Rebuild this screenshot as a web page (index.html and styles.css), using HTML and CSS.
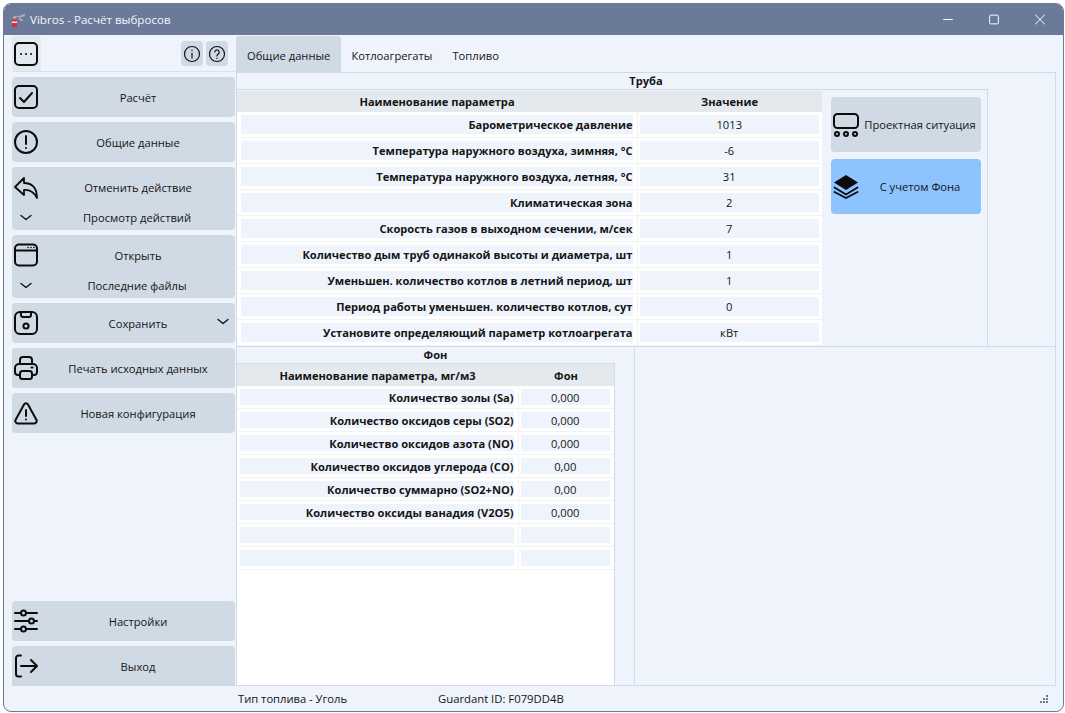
FILE: index.html
```html
<!DOCTYPE html>
<html lang="ru">
<head>
    <meta charset="UTF-8">
    <title>Vibros - Расчёт выбросов</title>
    <link rel="stylesheet" href="styles.css">
</head>
<body>
    <div class="window">
        <div class="titlebar">
            <svg class="app-icon" viewBox="0 0 16 16" width="16" height="16">
                <rect x="1" y="7" width="5" height="8" rx="1" fill="#d8303a"/>
                <rect x="1" y="9.500" width="5" height="1.500" fill="#f0e4e0"/>
                <path d="M2 7V4h6l6-2.500v3L9 5.500H5V7z" fill="#aeb3bc" stroke="#7f8591" stroke-width=".6"/>
                <path d="M9 5.500v2.500h3" fill="none" stroke="#c6cad1" stroke-width="1"/>
            </svg>
            <span class="app-title">Vibros - Расчёт выбросов</span>
            <div class="win-controls">
                <svg class="win-btn" viewBox="0 0 46 32"><path d="M18 16h10" stroke="#fff" fill="none"/></svg>
                <svg class="win-btn" viewBox="0 0 46 32"><rect x="18.5" y="11.5" width="9" height="9" rx="1" stroke="#fff" fill="none"/></svg>
                <svg class="win-btn" viewBox="0 0 46 32"><path d="M18 11l10 10M28 11L18 21" stroke="#fff" fill="none"/></svg>
            </div>
        </div>

        <div class="main">
            <div class="sidebar">
                <div class="side-top">
                    <div class="menu-btn">
                        <svg class="icon" viewBox="0 0 24 24"><rect x="1" y="1" width="22" height="22" rx="4"/><path d="M7 12h.01M12 12h.01M17 12h.01"/></svg>
                    </div>
                    <div class="help-btn">
                        <svg viewBox="0 0 18 18" width="18" height="18"><circle cx="9" cy="9" r="7.5"/><path d="M9 8v5M9 5v.5"/></svg>
                    </div>
                    <div class="help-btn">
                        <svg viewBox="0 0 18 18" width="18" height="18"><circle cx="9" cy="9" r="7.5"/><path d="M6.8 7a2.2 2.2 0 1 1 3.4 2c-.8.5-1.2 1-1.2 2M9 13v.5"/></svg>
                    </div>
                </div>

                <div class="side-btn">
                    <div class="side-row">
                        <svg class="icon" viewBox="0 0 24 24"><rect x="1" y="1" width="22" height="22" rx="4"/><path d="M6 13l4 4 8-9"/></svg>
                        <span class="side-label">Расчёт</span>
                    </div>
                </div>
                <div class="side-btn">
                    <div class="side-row">
                        <svg class="icon" viewBox="0 0 24 24"><circle cx="12" cy="12" r="11"/><path d="M12 6v8M12 18v.01"/></svg>
                        <span class="side-label">Общие данные</span>
                    </div>
                </div>
                <div class="side-btn">
                    <div class="side-row">
                        <svg class="icon" viewBox="0 0 24 24"><path d="M10 3L1 12l9 8v-5c6-.5 10 2 13 8 0-9-4-15-13-15z" stroke-width="1.800"/></svg>
                        <span class="side-label">Отменить действие</span>
                    </div>
                    <div class="side-sub">
                        <svg class="chevron" viewBox="0 0 12 8"><path d="M1 1.5l5 4 5-4"/></svg>
                        <span class="side-label">Просмотр действий</span>
                    </div>
                </div>
                <div class="side-btn">
                    <div class="side-row">
                        <svg class="icon" viewBox="0 0 24 24"><rect x="1" y="1.5" width="22" height="21" rx="4"/><path d="M1 7.5h22"/><path d="M14 4.5h.01M17 4.5h.01M20 4.5h.01" stroke-width="1.6"/></svg>
                        <span class="side-label">Открыть</span>
                    </div>
                    <div class="side-sub">
                        <svg class="chevron" viewBox="0 0 12 8"><path d="M1 1.5l5 4 5-4"/></svg>
                        <span class="side-label">Последние файлы</span>
                    </div>
                </div>
                <div class="side-btn">
                    <div class="side-row">
                        <svg class="icon" viewBox="0 0 24 24"><rect x="1" y="1" width="22" height="22" rx="5"/><path d="M7 1v3a2 2 0 0 0 2 2h6a2 2 0 0 0 2-2V1"/><circle cx="12" cy="15" r="2.600"/></svg>
                        <span class="side-label">Сохранить</span>
                        <svg class="chevron chevron-end" viewBox="0 0 12 8"><path d="M1 1.5l5 4 5-4"/></svg>
                    </div>
                </div>
                <div class="side-btn">
                    <div class="side-row">
                        <svg class="icon" viewBox="0 0 24 24"><path d="M6 8V4a3 3 0 0 1 3-3h6a3 3 0 0 1 3 3v4"/><path d="M6 19H4a3 3 0 0 1-3-3v-4a4 4 0 0 1 4-4h14a4 4 0 0 1 4 4v4a3 3 0 0 1-3 3h-2"/><rect x="6" y="15" width="12" height="8" rx="2.5"/><path d="M17.5 11.5h1"/></svg>
                        <span class="side-label">Печать исходных данных</span>
                    </div>
                </div>
                <div class="side-btn">
                    <div class="side-row">
                        <svg class="icon" viewBox="0 0 24 24"><path d="M10 3.5L1.5 19a2.5 2.5 0 0 0 2.2 3.5h16.6a2.5 2.5 0 0 0 2.2-3.5L14 3.5a2.3 2.3 0 0 0-4 0z"/><path d="M12 9v6M12 18.5v.01"/></svg>
                        <span class="side-label">Новая конфигурация</span>
                    </div>
                </div>

                <div class="side-spacer"></div>

                <div class="side-btn">
                    <div class="side-row">
                        <svg class="icon" viewBox="0 0 24 24"><path d="M1 4h6M12 4h11M1 12h14M20 12h3M1 20h6M12 20h11"/><circle cx="9.5" cy="4" r="2.5"/><circle cx="17.5" cy="12" r="2.5"/><circle cx="9.5" cy="20" r="2.5"/></svg>
                        <span class="side-label">Настройки</span>
                    </div>
                </div>
                <div class="side-btn side-last">
                    <div class="side-row">
                        <svg class="icon" viewBox="0 0 24 24"><path d="M7 1.5H4.5A2.5 2.5 0 0 0 2 4v16a2.500 2.500 0 0 0 2.500 2.500H7M7 12h16M17 6l6 6-6 6"/></svg>
                        <span class="side-label">Выход</span>
                    </div>
                </div>
            </div>

            <div class="content">
                <div class="tabs">
                    <div class="tab active">Общие данные</div>
                    <div class="tab">Котлоагрегаты</div>
                    <div class="tab">Топливо</div>
                </div>
                <div class="panel">
                    <div class="pipe-section">
                        <div class="caption">Труба</div>
                        <div class="pipe-body">
                            <table class="params pipe-table">
                                <thead>
                                    <tr><th class="name-col">Наименование параметра</th><th class="value-col">Значение</th></tr>
                                </thead>
                                <tbody>
                                    <tr><td><div class="cell name">Барометрическое давление</div></td><td><div class="cell">1013</div></td></tr>
                                    <tr><td><div class="cell name">Температура наружного воздуха, зимняя, °С</div></td><td><div class="cell">-6</div></td></tr>
                                    <tr><td><div class="cell name">Температура наружного воздуха, летняя, °С</div></td><td><div class="cell">31</div></td></tr>
                                    <tr><td><div class="cell name">Климатическая зона</div></td><td><div class="cell">2</div></td></tr>
                                    <tr><td><div class="cell name">Скорость газов в выходном сечении, м/сек</div></td><td><div class="cell">7</div></td></tr>
                                    <tr><td><div class="cell name">Количество дым труб одинакой высоты и диаметра, шт</div></td><td><div class="cell">1</div></td></tr>
                                    <tr><td><div class="cell name">Уменьшен. количество котлов в летний период, шт</div></td><td><div class="cell">1</div></td></tr>
                                    <tr><td><div class="cell name">Период работы уменьшен. количество котлов, сут</div></td><td><div class="cell">0</div></td></tr>
                                    <tr><td><div class="cell name">Установите определяющий параметр котлоагрегата</div></td><td><div class="cell">кВт</div></td></tr>
                                </tbody>
                            </table>
                            <div class="pipe-side">
                                <div class="mode-btn">
                                    <svg class="icon" viewBox="0 0 26 24"><rect x="1" y="1" width="24" height="14" rx="3.500"/><circle cx="4" cy="21" r="2"/><circle cx="13" cy="21" r="2"/><circle cx="22" cy="21" r="2"/></svg>
                                    <span class="mode-label">Проектная ситуация</span>
                                </div>
                                <div class="mode-btn selected">
                                    <svg class="icon layers" viewBox="0 0 26 24"><path class="layer-top" d="M13 0L25 7.500 13 15 1 7.500z"/><path d="M1.500 12.500L13 19.500l11.500-7M1.500 17L13 23l11.500-6" stroke-width="1.800" stroke-linejoin="miter"/></svg>
                                    <span class="mode-label">С учетом Фона</span>
                                </div>
                            </div>
                        </div>
                    </div>
                    <div class="bottom-section">
                        <div class="fon-col">
                            <div class="caption">Фон</div>
                            <div class="fon-frame">
                                <table class="params fon-table">
                                    <thead>
                                        <tr><th class="fon-name-col">Наименование параметра, мг/м3</th><th class="fon-value-col">Фон</th></tr>
                                    </thead>
                                    <tbody>
                                        <tr><td><div class="cell name">Количество золы (Sa)</div></td><td><div class="cell">0,000</div></td></tr>
                                        <tr><td><div class="cell name">Количество оксидов серы (SO2)</div></td><td><div class="cell">0,000</div></td></tr>
                                        <tr><td><div class="cell name">Количество оксидов азота (NO)</div></td><td><div class="cell">0,000</div></td></tr>
                                        <tr><td><div class="cell name">Количество оксидов углерода (CO)</div></td><td><div class="cell">0,00</div></td></tr>
                                        <tr><td><div class="cell name">Количество суммарно (SO2+NO)</div></td><td><div class="cell">0,00</div></td></tr>
                                        <tr><td><div class="cell name">Количество оксиды ванадия (V2O5)</div></td><td><div class="cell">0,000</div></td></tr>
                                        <tr><td><div class="cell name"></div></td><td><div class="cell"></div></td></tr>
                                        <tr><td><div class="cell name"></div></td><td><div class="cell"></div></td></tr>
                                    </tbody>
                                </table>
                            </div>
                        </div>
                    </div>
                </div>
            </div>
        </div>

        <div class="statusbar">
            <span class="fuel-type">Тип топлива - Уголь</span>
            <span class="guardant">Guardant ID: F079DD4B</span>
            <svg class="grip" viewBox="0 0 9 8" width="9" height="8">
                <path d="M7 0h2v2H7zM4 3h2v2H4zM7 3h2v2H7zM1 6h2v2H1zM4 6h2v2H4zM7 6h2v2H7z" fill="#6b7a99"/>
            </svg>
        </div>
    </div>
</body>
</html>
```

FILE: styles.css
```css
html, body {
    margin: 0;
    height: 100%;
    background: #fff;
    overflow: hidden;
}
body {
    font-family: "Open Sans", "Noto Sans", sans-serif;
    font-size: 11.2px;
    color: #151515;
}
.window {
    box-sizing: border-box;
    width: 1061px;
    height: 709px;
    margin: 3px 0 0 3px;
    display: flex;
    flex-direction: column;
    background: #eff4fc;
    border: 1px solid #6b7a99;
    border-radius: 8px;
    overflow: hidden;
}
.titlebar {
    flex: none;
    height: 31px;
    display: flex;
    align-items: center;
    background: #6b7a99;
    color: #f2f5fa;
    font-size: 11.600px;
}
.app-icon {
    margin-left: 7px;
}
.app-title {
    margin-left: 3px;
}
.win-controls {
    margin-left: auto;
    display: flex;
}
.win-btn {
    width: 46px;
    height: 31px;
}
.main {
    flex: 1;
    min-height: 0;
    display: flex;
    padding: 1px 7px 0 8px;
}
.sidebar {
    flex: none;
    width: 224px;
    display: flex;
    flex-direction: column;
    gap: 5px;
    box-sizing: border-box;
    padding-right: 1px;
}
.side-top {
    height: 36px;
    box-sizing: border-box;
    display: flex;
    align-items: center;
    gap: 3px;
    padding-right: 7px;
    border-bottom: 1px solid #d9e2ec;
}
.menu-btn {
    width: 29px;
    height: 35px;
    margin-right: auto;
    display: flex;
    align-items: center;
    padding-left: 2px;
    box-sizing: border-box;
    background: #e2e9f1;
    border-radius: 3px;
}
.help-btn {
    width: 22px;
    height: 25px;
    display: flex;
    align-items: center;
    justify-content: center;
    background: #d0dae4;
    border-radius: 4px;
}
.help-btn svg {
    fill: none;
    stroke: #111;
    stroke-width: 1.200;
    stroke-linecap: round;
}
.icon {
    flex: none;
    width: 24px;
    height: 24px;
    fill: none;
    stroke: #0c0c0c;
    stroke-width: 2;
    stroke-linecap: round;
    stroke-linejoin: round;
}
.side-btn {
    background: #d0dae4;
    border-radius: 4px;
}
.side-last {
    border-radius: 4px 4px 0 0;
}
.side-row {
    position: relative;
    height: 40px;
    display: flex;
    align-items: center;
    padding-left: 2px;
}
.side-sub {
    height: 21px;
    padding-bottom: 2px;
    display: flex;
    align-items: center;
    padding-left: 8px;
}
.side-label {
    flex: 1;
    text-align: center;
    padding-left: 3px;
}
.side-sub .side-label {
    padding-left: 7px;
}
.chevron {
    flex: none;
    width: 12px;
    height: 8px;
    fill: none;
    stroke: #111;
    stroke-width: 1.400;
    stroke-linecap: round;
    stroke-linejoin: round;
}
.chevron-end {
    position: absolute;
    right: 6px;
    top: 15px;
}
.side-spacer {
    flex: 1;
}
.content {
    flex: 1;
    min-width: 0;
    display: flex;
    flex-direction: column;
}
.tabs {
    flex: none;
    height: 36px;
    display: flex;
}
.tab {
    padding: 0 10px;
    line-height: 39px;
}
.tab.active {
    padding: 0 11px;
    background: #d0dae4;
    border-radius: 3px 3px 0 0;
}
.panel {
    flex: 1;
    min-height: 0;
    display: flex;
    flex-direction: column;
    border: 1px solid #cfdbe8;
}
.caption {
    height: 16px;
    line-height: 16px;
    text-align: center;
    font-weight: 700;
    font-size: 11.100px;
}
.pipe-section {
    flex: none;
    height: 274px;
    box-sizing: border-box;
    border-bottom: 1px solid #cfdbe8;
}
.pipe-body {
    width: 751px;
    height: 257px;
    box-sizing: border-box;
    display: flex;
    border-top: 1px solid #cfdbe8;
    border-right: 1px solid #cfdbe8;
}
.params {
    border-collapse: collapse;
    table-layout: fixed;
    background: #fff;
}
.params th {
    padding: 0;
    background: #e4e9ed;
    font-weight: 700;
    font-size: 11.100px;
    text-align: center;
}
.params td {
    padding: 3px;
    border-right: 1px solid #f3f3f3;
    border-bottom: 1px solid #f3f3f3;
}
.params td:first-child {
    padding-right: 4px;
}
.params td:last-child {
    padding-left: 2px;
    border-right: none;
}
.cell {
    background: #eff4fc;
    text-align: center;
    white-space: nowrap;
    overflow: hidden;
}
.cell.name {
    text-align: right;
    font-weight: 700;
    font-size: 11.100px;
}
.pipe-table {
    width: 585px;
    height: 255px;
    margin-top: 1px;
    align-self: flex-start;
}
.pipe-table th {
    height: 21px;
}
.pipe-table td:first-child {
    padding-left: 4px;
}
.pipe-table .cell {
    height: 19px;
    line-height: 19px;
}
.name-col {
    width: 400px;
}
.value-col {
    width: 185px;
}
.pipe-side {
    flex: 1;
    display: flex;
    flex-direction: column;
    gap: 7px;
    padding: 7px 0 0 9px;
}
.mode-btn {
    width: 150px;
    height: 55px;
    display: flex;
    align-items: center;
    padding-left: 2px;
    box-sizing: border-box;
    background: #d0dae4;
    border-radius: 4px;
}
.mode-btn.selected {
    background: #8dc3ff;
}
.mode-btn .icon {
    width: 26px;
}
.layer-top {
    fill: #0c0c0c;
    stroke: none;
}
.mode-label {
    flex: 1;
    text-align: center;
}
.bottom-section {
    flex: 1;
    min-height: 0;
    display: flex;
}
.fon-col {
    width: 397px;
    display: flex;
    flex-direction: column;
    border-right: 1px solid #cfdbe8;
}
.fon-frame {
    flex: 1;
    width: 378px;
    box-sizing: border-box;
    background: #fff;
    border-top: 1px solid #cfdbe8;
    border-right: 1px solid #cfdbe8;
}
.fon-table {
    width: 377px;
}
.fon-table th {
    height: 22px;
}
.fon-table td:last-child {
    padding-right: 4px;
}
.fon-table .cell {
    height: 16px;
    line-height: 18px;
}
.fon-name-col {
    width: 281px;
}
.fon-value-col {
    width: 96px;
}
.statusbar {
    flex: none;
    height: 25px;
    display: flex;
    align-items: center;
    padding-left: 234px;
    padding-right: 15px;
}
.fuel-type {
    width: 200px;
}
.guardant {
    font-size: 11.300px;
}
.grip {
    margin-left: auto;
}
```
